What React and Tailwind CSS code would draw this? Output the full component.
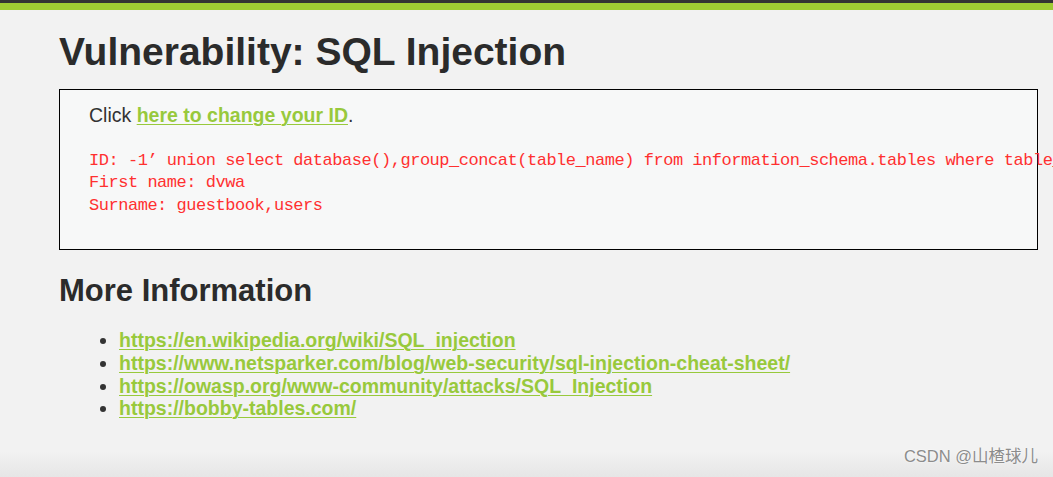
export default function App() {
    const links = [
        "https://en.wikipedia.org/wiki/SQL_injection",
        "https://www.netsparker.com/blog/web-security/sql-injection-cheat-sheet/",
        "https://owasp.org/www-community/attacks/SQL_Injection",
        "https://bobby-tables.com/"
    ];

    return (
        <div className="relative h-[477px] w-[1053px] overflow-hidden bg-[#f2f2f2] font-['Liberation_Sans',Arial,sans-serif] text-[#2b2b2b]">
            {/* header strip */}
            <div className="h-[3px] bg-[#333333]" />
            <div className="h-[7px] bg-[#9fcb33]" />

            <div className="pl-[59px]">
                <h1 className="mt-[22px] text-[39px] font-bold leading-none text-[#2b2b2b]">
                    Vulnerability: SQL Injection
                </h1>

                <div className="mt-[18px] w-[979px] border border-black bg-[#f7f8f8] pl-[29px] pt-[14px] pb-[32px]">
                    <p className="text-[19.5px] leading-[22.7px] text-[#333333]">
                        Click{" "}
                        <a href="#" className="font-bold text-[#98c93c] underline decoration-1 underline-offset-2">
                            here to change your ID
                        </a>
                        .
                    </p>
                    <pre className="mt-[23px] whitespace-pre font-['Liberation_Mono','Courier_New',monospace] text-[17px] leading-[22.5px] tracking-[-0.47px] text-[#ff3030]">
{`ID: -1’ union select database(),group_concat(table_name) from information_schema.tables where table_schema=database()#
First name: dvwa
Surname: guestbook,users`}
                    </pre>
                </div>

                <h2 className="mt-[25px] text-[31px] font-bold leading-none text-[#2b2b2b]">More Information</h2>

                <ul className="mt-[23px] list-disc pl-[60px] text-[19.5px] leading-[22.7px] marker:text-[#333333]">
                    {links.map(href => (
                        <li key={href}>
                            <a href="#" className="font-bold text-[#98c93c] underline decoration-1 underline-offset-2">
                                {href}
                            </a>
                        </li>
                    ))}
                </ul>
            </div>

            {/* bottom shading */}
            <div className="absolute inset-x-0 bottom-0 h-[26px] bg-gradient-to-b from-[#f2f2f2] to-[#e6e6e6]" />

            <div className="absolute right-[15px] bottom-[8px] font-['Liberation_Sans','Noto_Sans_CJK_SC',sans-serif] text-[16.5px] text-[#8c8c8c] [text-shadow:0_0_2px_#ffffff]">
                CSDN @山楂球儿
            </div>
        </div>
    );
}
